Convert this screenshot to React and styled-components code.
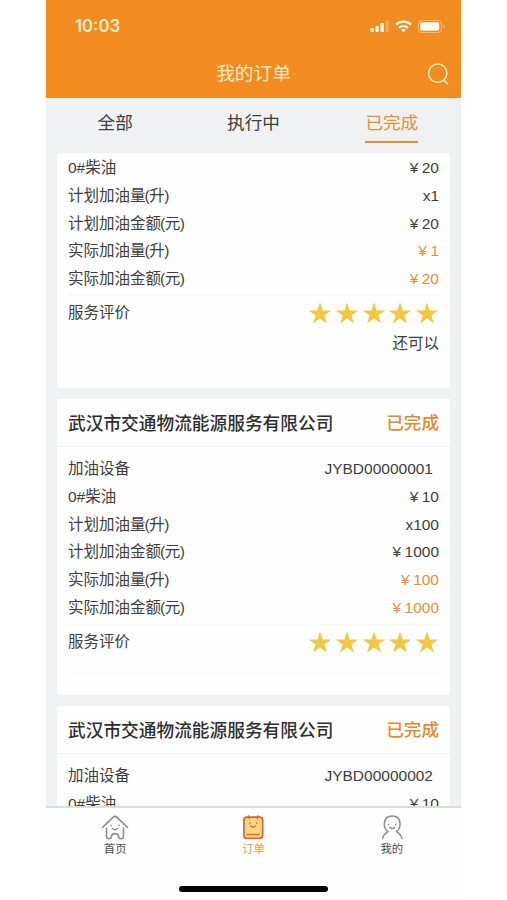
import React, { useState } from 'react'
import styled, { createGlobalStyle } from 'styled-components';

const GlobalStyle = createGlobalStyle`
  * {
    box-sizing: border-box;
  }
  body {
    margin: 0;
    background-color: #ffffff;
    font-family: "Liberation Sans", "Noto Sans CJK SC", sans-serif;
    color: #3d3d3d;
  }
`;
const Phone = styled.div`
  width: 415px;
  height: 900px;
  margin-left: 46px;
  display: flex;
  flex-direction: column;
  overflow: hidden;
  background-color: #fefefe;
`;
const Header = styled.header`
  height: 98px;
  flex-shrink: 0;
  background-color: #f28b20;
  color: #ffedc8;
`;
const StatusBar = styled.div`
  height: 52px;
  padding: 0 16px 0 29px;
  display: flex;
  justify-content: space-between;
  align-items: center;
`;
const Time = styled.span`
  font-family: Inter, sans-serif;
  font-size: 16.7px;
  font-weight: 600;
`;
const StatusIcons = styled.div`
  display: flex;
  align-items: center;
  gap: 6px;
  svg {
    display: block;
  }
`;
const NavBar = styled.div`
  height: 44px;
  padding: 0 11px;
  display: grid;
  grid-template-columns: 24px 1fr 24px;
  align-items: center;
`;
const NavTitle = styled.h1`
  grid-column: 2;
  margin: 0;
  text-align: center;
  font-size: 18.7px;
  font-weight: 400;
  line-height: 44px;
`;
const SearchBtn = styled.button`
  width: 24px;
  height: 22px;
  padding: 0 0 0 1px;
  border: 0;
  background: none;
  color: inherit;
  svg {
    display: block;
  }
`;
const Tabs = styled.div`
  height: 55px;
  flex-shrink: 0;
  display: grid;
  grid-template-columns: repeat(3, 1fr);
  justify-items: center;
  align-items: start;
  padding-top: 8px;
  background-color: #eff1f3;
`;
const Tab = styled.button`
  height: 37px;
  padding: 0;
  border: 0;
  border-bottom: 2px solid ${({ $active }) => ($active ? '#e58e38' : 'transparent')};
  background: none;
  color: ${({ $active }) => ($active ? '#e58e38' : '#3d3d3d')};
  font-family: inherit;
  font-size: 17.6px;
  line-height: 35px;
`;
const List = styled.main`
  flex: 1;
  min-height: 0;
  overflow: hidden;
  padding: 0 11px;
  display: flex;
  flex-direction: column;
  gap: 11px;
  background-color: #eff1f3;
`;
const Card = styled.section`
  height: ${({ $height }) => $height}px;
  flex-shrink: 0;
  border-radius: 3px;
  background-color: #fefefe;
`;
const CardHead = styled.div`
  height: 48px;
  padding: 0 11px 2px;
  display: flex;
  justify-content: space-between;
  align-items: center;
  border-bottom: 1px solid #f1f2f2;
  font-size: 17.7px;
  font-weight: 500;
  color: #2e2e2e;
`;
const Status = styled.span`
  font-size: 17.6px;
  color: #e38a30;
`;
const Rows = styled.div`
  padding: ${({ $top }) => $top}px 11px 2px;
`;
const Row = styled.div`
  height: 27.75px;
  display: flex;
  justify-content: space-between;
  align-items: center;
  font-size: 15.5px;
  line-height: 27.75px;
`;
const Unit = styled.span`
  margin-left: -1px;
  letter-spacing: -0.5px;
`;
const Value = styled.span`
  padding-right: ${({ $inset }) => ($inset ? 6 : 0)}px;
  color: ${({ $accent }) => ($accent ? '#e58e38' : '#3d3d3d')};
`;
const Yen = styled.span`
  margin-right: 3.5px;
`;
const Rating = styled.div`
  margin: 0 11px;
  border-top: 1px solid #f6f6f6;
  border-bottom: 1px solid #f9f9f9;
  height: ${({ $tall }) => ($tall ? 71 : 49)}px;
  font-size: 15.5px;
`;
const RatingLine = styled.div`
  height: 31px;
  display: flex;
  justify-content: space-between;
  align-items: center;
`;
const Stars = styled.div`
  display: flex;
  gap: 2.7px;
  padding-top: 5px;
  svg {
    display: block;
  }
`;
const Comment = styled.div`
  text-align: right;
  line-height: 33px;
`;
const TabBar = styled.nav`
  height: 94px;
  flex-shrink: 0;
  border-top: 2px solid #dcdddd;
  background-color: #fefefe;
  display: flex;
  flex-direction: column;
  justify-content: space-between;
  align-items: center;
`;
const TabBarItems = styled.div`
  width: 100%;
  display: grid;
  grid-template-columns: repeat(3, 1fr);
`;
const TabBarItem = styled.a`
  padding-top: 6px;
  display: flex;
  flex-direction: column;
  align-items: center;
  color: ${({ $active }) => ($active ? '#ec9a49' : '#4a4a4a')};
  font-size: 11.3px;
  line-height: 17px;
  svg {
    display: block;
  }
`;
const HomeIndicator = styled.div`
  width: 149px;
  height: 6px;
  margin-bottom: 8px;
  border-radius: 3px;
  background-color: #000000;
`;

const SignalIcon = () => (
  <svg width="19" height="12" viewBox="0 0 19 12" fill="#fffaf0">
    <rect x="0.5" y="8" width="3.2" height="4" rx="0.8" />
    <rect x="5.5" y="6" width="3.2" height="6" rx="0.8" />
    <rect x="10.5" y="3" width="3.4" height="9" rx="0.8" />
    <rect x="15.8" y="0.5" width="2.8" height="11.5" rx="0.8" opacity="0.3" />
  </svg>
)
const WifiIcon = () => (
  <svg width="17" height="13" viewBox="0 0 17 13" fill="none" stroke="#fffaf0" strokeWidth="2.3">
    <path d="M1 4.7C5.2 0.7 11.8 0.7 16 4.7" />
    <path d="M4 7.9C6.6 5.5 10.4 5.5 13 7.9" />
    <path d="M8.5 12.3L5.9 9.7C7.4 8.5 9.6 8.5 11.1 9.7Z" fill="#fffaf0" stroke="none" />
  </svg>
)
const BatteryIcon = () => (
  <svg width="27" height="13" viewBox="0 0 27 13">
    <rect x="0.5" y="0.5" width="23" height="12" rx="3.5" fill="none" stroke="#fffaf0" opacity="0.45" />
    <rect x="2.2" y="2.2" width="19" height="8.6" rx="1.8" fill="#fffaf0" />
    <path d="M25 4.5C26.8 5 26.8 8 25 8.5Z" fill="#fffaf0" opacity="0.45" />
  </svg>
)
const SearchIcon = () => (
  <svg width="22" height="22" viewBox="0 0 22 22" fill="none" stroke="currentColor" strokeWidth="1.5" strokeLinecap="round">
    <circle cx="10.7" cy="10.3" r="9.2" />
    <path d="M17 17.4L20.6 20.8" />
  </svg>
)
const Star = () => (
  <svg width="24" height="23" viewBox="0 0 24 23" fill="#f2c744">
    <path d="M12 0.5L14.7 8.4L23.2 8.4L16.4 13.4L19 21.6L12 16.6L5 21.6L7.6 13.4L0.8 8.4L9.3 8.4Z" />
  </svg>
)
const HomeIcon = () => (
  <svg width="28" height="27" viewBox="0 0 28 27" fill="none" stroke="#8e8e8e" strokeWidth="1.6" strokeLinecap="round" strokeLinejoin="round">
    <path d="M1.5 13.4L12 3.3Q14 1.5 16 3.3L26.5 13.4" />
    <path d="M5.5 14V22Q5.5 24.7 8 24.7Q10.4 24.7 10.4 22.3Q10.7 19.6 14 19.6Q17.3 19.6 17.6 22.3Q17.6 24.7 20 24.7Q22.5 24.7 22.5 22V14" />
    <path d="M10 11.3V11.7M18 11.3V11.7M11.6 14.5Q14 16.9 16.4 14.5" />
  </svg>
)
const OrderIcon = () => (
  <svg width="28" height="27" viewBox="0 0 28 27" fill="none" stroke="#d8663b" strokeLinecap="round" strokeLinejoin="round">
    <rect x="4.9" y="3.2" width="18.8" height="21.2" rx="3" fill="#ffd680" strokeWidth="1.7" />
    <path d="M9.6 2.2L10.3 4.2M19 2.2L18.3 4.2" strokeWidth="1.8" />
    <path d="M10.8 8.9V9.6M17.8 8.9V9.6M12 12Q14.3 14.4 16.6 12" strokeWidth="1.4" />
    <path d="M8.5 20.5H20" strokeWidth="1.6" />
  </svg>
)
const MineIcon = () => (
  <svg width="28" height="27" viewBox="0 0 28 27" fill="none" stroke="#8e8e8e" strokeWidth="1.5" strokeLinecap="round" strokeLinejoin="round">
    <path d="M4.5 24.4C5.2 21 7.4 19.3 10 17.7C7.2 15.7 6 13.2 6.4 9.3C6.5 4.2 9.5 1.9 14.2 1.9C18.9 1.9 21.9 4.2 22 9.3C22.4 13.2 21.2 15.7 18.4 17.7C21 19.3 23.2 21 23.9 24.4" />
    <path d="M10.6 10.3V10.7M17.8 10.3V10.7M11.8 13.4Q14.2 15.7 16.6 13.4" />
  </svg>
)

const COMPANY = '武汉市交通物流能源服务有限公司'
const tabs = ['全部', '执行中', '已完成']
const menus = [
  { title: '首页', icon: <HomeIcon /> },
  { title: '订单', icon: <OrderIcon /> },
  { title: '我的', icon: <MineIcon /> },
]
const orders = [
  {
    id: 1,
    height: 235,
    price: 20,
    detail: { planAmount: 1, planPrice: 20, realAmount: 1, realPrice: 20, comment: '还可以' },
  },
  {
    id: 2,
    height: 296,
    company: COMPANY,
    device: 'JYBD00000001',
    price: 10,
    detail: { planAmount: 100, planPrice: 1000, realAmount: 100, realPrice: 1000 },
  },
  { id: 3, height: 296, company: COMPANY, device: 'JYBD00000002', price: 10 },
]

function Money({ value, accent }) {
  return <Value $accent={accent}><Yen>¥</Yen>{value}</Value>
}

function Label({ title, unit }) {
  return <span>{title}{unit && <Unit>({unit})</Unit>}</span>
}

function OrderCard({ order }) {
  const { company, device, price, detail } = order;

  return (
    <Card $height={order.height}>
      {company && (
        <CardHead>
          <span>{company}</span>
          <Status>已完成</Status>
        </CardHead>
      )}
      <Rows $top={company ? 8 : 1}>
        {device && <Row><Label title='加油设备' /><Value $inset>{device}</Value></Row>}
        <Row><Label title='0#柴油' /><Money value={price} /></Row>
        {detail && (
          <>
            <Row><Label title='计划加油量' unit='升' /><Value>x{detail.planAmount}</Value></Row>
            <Row><Label title='计划加油金额' unit='元' /><Money value={detail.planPrice} /></Row>
            <Row><Label title='实际加油量' unit='升' /><Money value={detail.realAmount} accent /></Row>
            <Row><Label title='实际加油金额' unit='元' /><Money value={detail.realPrice} accent /></Row>
          </>
        )}
      </Rows>
      {detail && (
        <Rating $tall={!!detail.comment}>
          <RatingLine>
            <Label title='服务评价' />
            <Stars>
              {[1, 2, 3, 4, 5].map((n) => <Star key={n} />)}
            </Stars>
          </RatingLine>
          {detail.comment && <Comment>{detail.comment}</Comment>}
        </Rating>
      )}
    </Card>
  )
}

function App() {
  const [tab, setTab] = useState(2);

  return (
    <>
      <GlobalStyle />
      <Phone>
        <Header>
          <StatusBar>
            <Time>10:03</Time>
            <StatusIcons>
              <SignalIcon />
              <WifiIcon />
              <BatteryIcon />
            </StatusIcons>
          </StatusBar>
          <NavBar>
            <NavTitle>我的订单</NavTitle>
            <SearchBtn><SearchIcon /></SearchBtn>
          </NavBar>
        </Header>
        <Tabs>
          {tabs.map((title, i) => (
            <Tab key={title} $active={tab === i} onClick={() => setTab(i)}>{title}</Tab>
          ))}
        </Tabs>
        <List>
          {orders.map((order) => <OrderCard key={order.id} order={order} />)}
        </List>
        <TabBar>
          <TabBarItems>
            {menus.map((menu) => (
              <TabBarItem key={menu.title} $active={menu.title === '订单'}>
                {menu.icon}
                {menu.title}
              </TabBarItem>
            ))}
          </TabBarItems>
          <HomeIndicator />
        </TabBar>
      </Phone>
    </>
  )
}

export default App
